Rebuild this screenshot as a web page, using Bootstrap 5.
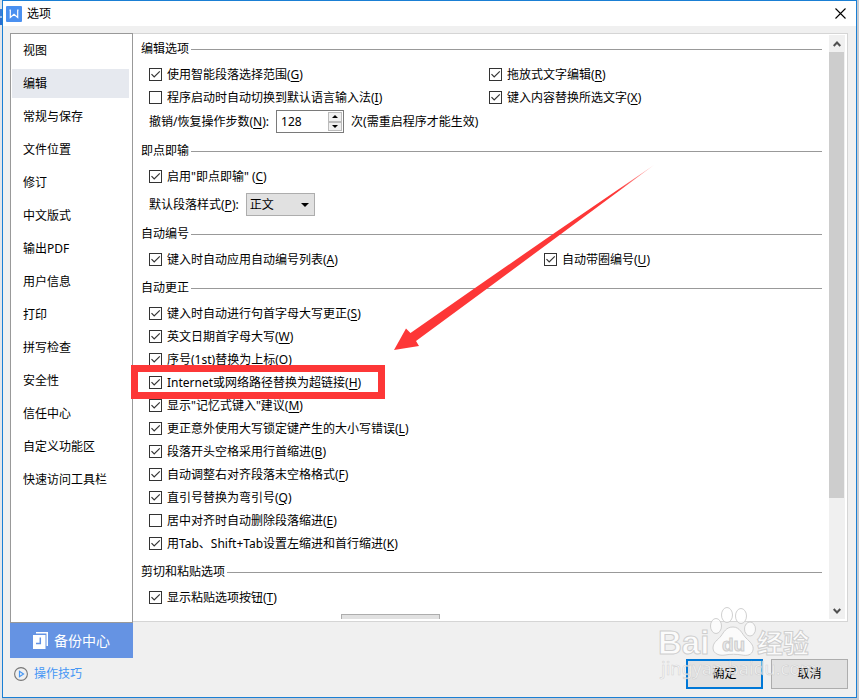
<!DOCTYPE html>
<html lang="zh-CN">
<head>
<meta charset="utf-8">
<meta name="viewport" content="width=device-width, initial-scale=1">
<title>选项</title>
<link href="https://cdn.jsdelivr.net/npm/bootstrap@5.3.0/dist/css/bootstrap.min.css" rel="stylesheet">
<style>
  body {
    font-family: "Noto Sans", "Noto Sans CJK SC", sans-serif;
    font-size: 12px;
    line-height: 20px;
    color: #000;
    background: #c9cbd0;
  }
  .desktop { padding: 0 2px 2px; }
  .desktop-left {
    left: 0; top: 0; width: 2px; height: 100%;
    background: linear-gradient(#dfe3e8 0 9px, #3b7dd8 9px 16px, #9cc0ee 16px 18px, #2a6fd0 18px 25px, #e4e6ea 25px);
  }
  .dialog-window { border: 1px solid #1a7fd4; background: #f0f0f0; }
  .title-bar { height: 25px; padding-left: 3px; gap: 5px; }
  .title-bar h1 { font-size: 12px; line-height: 20px; font-weight: 400; }
  .close-btn { width: 31px; height: 25px; }
  .dialog-main { padding: 7px 8px 7px 7px; }

  .side-col { width: 123px; }
  .side-list { border: 1px solid #999; padding: 2px 3px 0 1px; gap: 4px; }
  .side-list a { height: 29px; padding-left: 11px; color: #000; text-decoration: none; line-height: 29px; }
  .side-list a.active { background: #e6e9ef; }
  .backup-btn { height: 35px; background: #6593e3; color: #fff; font-size: 14px; gap: 6px; padding-right: 6px; }
  .tips-link { height: 32px; padding-left: 4px; gap: 6px; color: #4496f5; text-decoration: none; }

  .option-pane { border: 1px solid #d5d5d5; border-left: 0; padding: 1px 2px 2px 8px; }
  .option-scroll { padding-top: 4px; margin-right: 7px; }
  .scroll-track { width: 16px; background: #f0f0f0; }
  .scroll-track button { height: 17px; }
  .scroll-thumb { flex: 0 0 81%; background: #cdcdcd; margin-right: 1px; }

  fieldset { padding-bottom: 7px; }
  legend { font-size: 12px; line-height: 20px; margin-bottom: 4px; gap: 2px; }
  legend::after { content: ""; flex: 1; height: 1px; background: #999; }
  .option-rows { clear: both; padding-left: 8px; }
  .option-row { height: 23px; }
  .option-row.tall { height: 25px; gap: 7px; }
  .option-row.spaced { margin-top: 4px; }
  .first-wide { flex: 0 0 340px; }
  .first-wider { flex: 0 0 395px; }
  .check-item { gap: 5px; white-space: nowrap; }
  .check-item .form-check-input {
    width: 13px; height: 13px; margin: 0; border: 1px solid #333; border-radius: 0; background-color: #fff;
  }
  .check-item .form-check-input:checked {
    background-color: #fff;
    background-image: url("data:image/svg+xml,%3Csvg xmlns='http://www.w3.org/2000/svg' viewBox='0 0 11 11'%3E%3Cpath d='M1.5 5.2 4.2 8 9.8 2.4' fill='none' stroke='%23333' stroke-width='1.2'/%3E%3C/svg%3E");
  }
  u { text-underline-offset: 2px; }

  .spin-box { width: 68px; height: 23px; border: 1px solid #7a7a7a; padding: 1px; background: #fff; }
  .spin-box input { width: 50px; border: 0; padding: 0 0 0 3px; font-size: 12px; }
  .spin-box button { width: 14px; border: 1px solid #bbb; background: #f0f0f0; }
  .style-select {
    width: 69px; height: 23px; padding: 0 18px 0 3px; border: 1px solid #adadad; border-radius: 0;
    font-size: 12px; line-height: 20px; color: #000; background-color: #e1e1e1;
    background-image: url("data:image/svg+xml,%3Csvg xmlns='http://www.w3.org/2000/svg' viewBox='0 0 8 4'%3E%3Cpath d='M0 0h8L4 4z'/%3E%3C/svg%3E");
    background-size: 8px 4px; background-position: right 5px center;
  }
  .flat-btn { height: 30px; width: 77px; padding: 0; border: 1px solid #adadad; border-radius: 0; background: #e1e1e1; font-size: 12px; line-height: 20px; color: #000; }
  .flat-btn.default { border: 2px solid #0078d7; }
  .paste-btn { width: 99px; margin-left: 192px; margin-top: 5px; }
  .footer-bar { padding: 37px 0 1px; gap: 8px; }

  .note-arrow { left: 392px; top: 164px; z-index: 3; pointer-events: none; }
  .note-frame { left: 131px; top: 365px; z-index: 3; pointer-events: none; }
  .site-mark { right: 39px; bottom: 14px; z-index: 3; pointer-events: none; }
</style>
<script src="https://cdn.jsdelivr.net/npm/bootstrap@5.3.0/dist/js/bootstrap.bundle.min.js"></script>
</head>
<body>
<div class="desktop position-relative vh-100 d-flex overflow-hidden">
  <div class="desktop-left position-absolute"></div>
  <div class="dialog-window flex-fill d-flex flex-column">
    <header class="title-bar bg-white d-flex align-items-center flex-shrink-0">
      <svg width="16" height="16" viewBox="0 0 16 16" aria-hidden="true"><rect width="16" height="16" rx="1" fill="#4a90f0"/><path d="M3.500 4.200h1.300M4.300 4.200v7.300L8 8.200l3.700 3.300V4.200M11.200 4.200h1.300" fill="none" stroke="#fff" stroke-width="1.200"/></svg>
      <h1 class="m-0 me-auto">选项</h1>
      <button type="button" class="close-btn border-0 bg-transparent p-0" aria-label="关闭">
        <svg class="d-block mx-auto" width="11" height="11" viewBox="0 0 11 11"><path d="M.5.5l10 10M10.500.5l-10 10" stroke="#000" stroke-width="1.100"/></svg>
      </button>
    </header>

    <main class="dialog-main flex-fill d-flex overflow-hidden">
      <div class="side-col d-flex flex-column flex-shrink-0">
        <nav class="side-list bg-white flex-fill d-flex flex-column">
          <a href="#">视图</a>
          <a href="#" class="active" aria-current="page">编辑</a>
          <a href="#">常规与保存</a>
          <a href="#">文件位置</a>
          <a href="#">修订</a>
          <a href="#">中文版式</a>
          <a href="#">输出PDF</a>
          <a href="#">用户信息</a>
          <a href="#">打印</a>
          <a href="#">拼写检查</a>
          <a href="#">安全性</a>
          <a href="#">信任中心</a>
          <a href="#">自定义功能区</a>
          <a href="#">快速访问工具栏</a>
        </nav>
        <button type="button" class="backup-btn border-0 d-flex align-items-center justify-content-center flex-shrink-0">
          <svg width="15" height="17" viewBox="0 0 15 17" aria-hidden="true"><path d="M3 0h12v14h-1.500V1.500H3z" fill="#fff"/><path d="M0 3h12.500v14H0z" fill="#fff"/><path d="M7.300 5.500v6H3" fill="none" stroke="#6593e3" stroke-width="1.500"/></svg>
          备份中心
        </button>
        <a href="#" class="tips-link d-flex align-items-center flex-shrink-0">
          <svg width="14" height="14" viewBox="0 0 14 14" aria-hidden="true"><circle cx="7" cy="7" r="6.400" fill="none" stroke="#777" stroke-width="1.100"/><path d="M5.500 4.300v5.400L9.500 7z" fill="none" stroke="#4496f5" stroke-width="1.200"/></svg>
          操作技巧
        </a>
      </div>

      <div class="flex-fill d-flex flex-column overflow-hidden">
        <div class="option-pane bg-white flex-fill d-flex overflow-hidden">
          <form class="option-scroll flex-fill overflow-hidden">
            <fieldset>
              <legend class="d-flex align-items-center">编辑选项</legend>
              <div class="option-rows">
                <div class="option-row d-flex align-items-center">
                  <div class="first-wide d-flex"><label class="check-item d-inline-flex align-items-center"><input class="form-check-input" type="checkbox" checked><span>使用智能段落选择范围(<u>G</u>)</span></label></div>
                  <label class="check-item d-inline-flex align-items-center"><input class="form-check-input" type="checkbox" checked><span>拖放式文字编辑(<u>R</u>)</span></label>
                </div>
                <div class="option-row d-flex align-items-center">
                  <div class="first-wide d-flex"><label class="check-item d-inline-flex align-items-center"><input class="form-check-input" type="checkbox"><span>程序启动时自动切换到默认语言输入法(<u>I</u>)</span></label></div>
                  <label class="check-item d-inline-flex align-items-center"><input class="form-check-input" type="checkbox" checked><span>键入内容替换所选文字(<u>X</u>)</span></label>
                </div>
                <div class="option-row tall d-flex align-items-center">
                  <label for="undo-steps">撤销/恢复操作步数(<u>N</u>):</label>
                  <div class="spin-box d-flex">
                    <input id="undo-steps" type="text" value="128">
                    <div class="d-flex flex-column">
                      <button type="button" class="flex-fill p-0 d-flex align-items-center justify-content-center" aria-label="增加"><svg width="6" height="3" viewBox="0 0 6 3"><path d="M0 3h6L3 0z"/></svg></button>
                      <button type="button" class="flex-fill p-0 d-flex align-items-center justify-content-center" aria-label="减少"><svg width="6" height="3" viewBox="0 0 6 3"><path d="M0 0h6L3 3z"/></svg></button>
                    </div>
                  </div>
                  <span>次(需重启程序才能生效)</span>
                </div>
              </div>
            </fieldset>

            <fieldset>
              <legend class="d-flex align-items-center">即点即输</legend>
              <div class="option-rows">
                <div class="option-row d-flex align-items-center">
                  <label class="check-item d-inline-flex align-items-center"><input class="form-check-input" type="checkbox" checked><span>启用"即点即输" (<u>C</u>)</span></label>
                </div>
                <div class="option-row tall spaced d-flex align-items-center">
                  <label for="para-style">默认段落样式(<u>P</u>):</label>
                  <select id="para-style" class="form-select style-select"><option>正文</option></select>
                </div>
              </div>
            </fieldset>

            <fieldset>
              <legend class="d-flex align-items-center">自动编号</legend>
              <div class="option-rows">
                <div class="option-row d-flex align-items-center">
                  <div class="first-wider d-flex"><label class="check-item d-inline-flex align-items-center"><input class="form-check-input" type="checkbox" checked><span>键入时自动应用自动编号列表(<u>A</u>)</span></label></div>
                  <label class="check-item d-inline-flex align-items-center"><input class="form-check-input" type="checkbox" checked><span>自动带圈编号(<u>U</u>)</span></label>
                </div>
              </div>
            </fieldset>

            <fieldset>
              <legend class="d-flex align-items-center">自动更正</legend>
              <div class="option-rows">
                <div class="option-row d-flex align-items-center"><label class="check-item d-inline-flex align-items-center"><input class="form-check-input" type="checkbox" checked><span>键入时自动进行句首字母大写更正(<u>S</u>)</span></label></div>
                <div class="option-row d-flex align-items-center"><label class="check-item d-inline-flex align-items-center"><input class="form-check-input" type="checkbox" checked><span>英文日期首字母大写(<u>W</u>)</span></label></div>
                <div class="option-row d-flex align-items-center"><label class="check-item d-inline-flex align-items-center"><input class="form-check-input" type="checkbox" checked><span>序号(1st)替换为上标(<u>O</u>)</span></label></div>
                <div class="option-row d-flex align-items-center"><label class="check-item d-inline-flex align-items-center"><input class="form-check-input" type="checkbox" checked><span>Internet或网络路径替换为超链接(<u>H</u>)</span></label></div>
                <div class="option-row d-flex align-items-center"><label class="check-item d-inline-flex align-items-center"><input class="form-check-input" type="checkbox" checked><span>显示"记忆式键入"建议(<u>M</u>)</span></label></div>
                <div class="option-row d-flex align-items-center"><label class="check-item d-inline-flex align-items-center"><input class="form-check-input" type="checkbox" checked><span>更正意外使用大写锁定键产生的大小写错误(<u>L</u>)</span></label></div>
                <div class="option-row d-flex align-items-center"><label class="check-item d-inline-flex align-items-center"><input class="form-check-input" type="checkbox" checked><span>段落开头空格采用行首缩进(<u>B</u>)</span></label></div>
                <div class="option-row d-flex align-items-center"><label class="check-item d-inline-flex align-items-center"><input class="form-check-input" type="checkbox" checked><span>自动调整右对齐段落末空格格式(<u>F</u>)</span></label></div>
                <div class="option-row d-flex align-items-center"><label class="check-item d-inline-flex align-items-center"><input class="form-check-input" type="checkbox" checked><span>直引号替换为弯引号(<u>Q</u>)</span></label></div>
                <div class="option-row d-flex align-items-center"><label class="check-item d-inline-flex align-items-center"><input class="form-check-input" type="checkbox"><span>居中对齐时自动删除段落缩进(<u>E</u>)</span></label></div>
                <div class="option-row d-flex align-items-center"><label class="check-item d-inline-flex align-items-center"><input class="form-check-input" type="checkbox" checked><span>用Tab、Shift+Tab设置左缩进和首行缩进(<u>K</u>)</span></label></div>
              </div>
            </fieldset>

            <fieldset>
              <legend class="d-flex align-items-center">剪切和粘贴选项</legend>
              <div class="option-rows">
                <div class="option-row d-flex align-items-center"><label class="check-item d-inline-flex align-items-center"><input class="form-check-input" type="checkbox" checked><span>显示粘贴选项按钮(<u>T</u>)</span></label></div>
                <button type="button" class="flat-btn paste-btn d-block" aria-label="粘贴设置"></button>
              </div>
            </fieldset>
          </form>
          <div class="scroll-track d-flex flex-column flex-shrink-0">
            <button type="button" class="border-0 bg-transparent p-0 flex-shrink-0" aria-label="向上滚动"><svg class="d-block mx-auto" width="8" height="6" viewBox="0 0 8 6"><path d="M.7 5 4 1.500 7.300 5" fill="none" stroke="#505050" stroke-width="2"/></svg></button>
            <div class="flex-fill d-flex flex-column"><div class="scroll-thumb"></div></div>
            <button type="button" class="border-0 bg-transparent p-0 flex-shrink-0" aria-label="向下滚动"><svg class="d-block mx-auto" width="8" height="6" viewBox="0 0 8 6"><path d="M.7 1 4 4.500 7.300 1" fill="none" stroke="#505050" stroke-width="2"/></svg></button>
          </div>
        </div>
        <footer class="footer-bar d-flex justify-content-end flex-shrink-0">
          <button type="button" class="flat-btn default">确定</button>
          <button type="button" class="flat-btn">取消</button>
        </footer>
      </div>
    </main>
  </div>

  <svg class="note-arrow position-absolute" width="262" height="188" viewBox="0 0 262 188" aria-hidden="true">
    <defs><linearGradient id="tail-fade" gradientUnits="userSpaceOnUse" x1="262" y1="0" x2="225" y2="26"><stop offset="0" stop-color="#fd3737" stop-opacity=".3"/><stop offset="1" stop-color="#fd3737"/></linearGradient></defs>
    <path d="M2 186 14 164.500 18.500 169 83 124 161 70 262 1 169 70 96 124 24 177 27 182z" fill="url(#tail-fade)"/>
  </svg>
  <svg class="note-frame position-absolute" width="254" height="34" viewBox="0 0 254 34" aria-hidden="true"><rect x="3.500" y="3.500" width="247" height="27" fill="none" stroke="#fd3737" stroke-width="7"/></svg>

  <svg class="site-mark position-absolute" width="164" height="80" viewBox="-4 0 164 80" aria-hidden="true">
    <g fill="#fff" fill-opacity=".75" stroke="#c4c4c4" stroke-opacity=".8">
      <text x="-2" y="48" font-family="Liberation Sans, sans-serif" font-size="33" font-weight="700">Bai</text>
      <ellipse cx="56" cy="20" rx="5.500" ry="7.500"/><ellipse cx="67" cy="9" rx="5.500" ry="7.500"/>
      <ellipse cx="81" cy="10" rx="5.500" ry="7.500"/><ellipse cx="90" cy="23" rx="5.500" ry="7"/>
      <path d="M73 21c7 0 9 7 13 11s8 7 7 12-6 6-11 5-12-1-17 0-12-1-12-7 5-8 8-12 5-9 12-9z"/>
      <text x="97" y="47" font-family="Noto Sans CJK SC, sans-serif" font-size="26" font-weight="700">经验</text>
      <text x="62" y="45" font-family="Liberation Sans, sans-serif" font-size="19" font-weight="700" fill="#e4e4e4">du</text>
    </g>
    <text x="1" y="69" font-family="Noto Sans, sans-serif" font-size="18" fill="#fff" fill-opacity=".7" stroke="#bbb" stroke-opacity=".6" stroke-width=".6">jingyan.baidu.com</text>
  </svg>
</div>
</body>
</html>
